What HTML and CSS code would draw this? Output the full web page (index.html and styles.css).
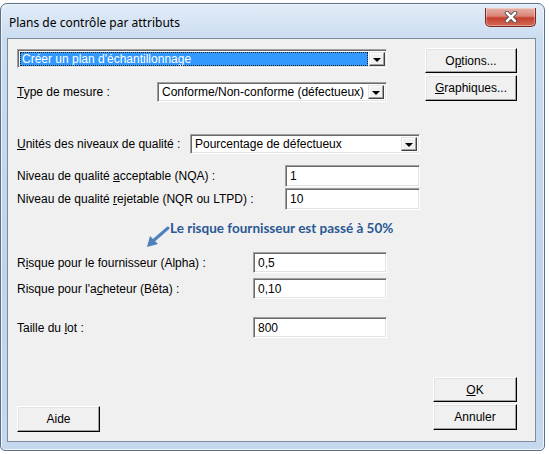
FILE: index.html
```html
<!DOCTYPE html>
<html lang="fr">
<head>
    <meta charset="UTF-8">
    <meta name="viewport" content="width=device-width, initial-scale=1.0">
    <title>Plans de contrôle par attributs</title>
    <link rel="stylesheet" href="styles.css">
</head>
<body>
    <div class="window">
        <div class="titlebar">
            <span class="title">Plans de contrôle par attributs</span>
            <span class="close">
                <svg width="14" height="12" viewBox="0 0 14 12">
                    <path d="M3 2 L11 10 M11 2 L3 10" stroke="#4a4a4a" stroke-width="4.4" stroke-linecap="round"/>
                    <path d="M3 2 L11 10 M11 2 L3 10" stroke="#ffffff" stroke-width="2.6" stroke-linecap="round"/>
                </svg>
            </span>
        </div>
        <div class="client">
            <div class="top">
                <div class="top-left">
                    <div class="combo combo-main">
                        <span class="combo-text selected">Créer un plan d'échantillonnage</span>
                        <span class="drop"></span>
                    </div>
                    <div class="row row-type">
                        <span class="lbl lbl-type"><u>T</u>ype de mesure :</span>
                        <div class="combo combo-type">
                            <span class="combo-text">Conforme/Non-conforme (défectueux)</span>
                            <span class="drop"></span>
                        </div>
                    </div>
                </div>
                <div class="side">
                    <button class="btn btn-options">O<u>p</u>tions...</button>
                    <button class="btn btn-graph"><u>G</u>raphiques...</button>
                </div>
            </div>

            <div class="row row-units">
                <span class="lbl lbl-units"><u>U</u>nités des niveaux de qualité :</span>
                <div class="combo combo-units">
                    <span class="combo-text">Pourcentage de défectueux</span>
                    <span class="drop"></span>
                </div>
            </div>
            <div class="row row-nqa">
                <span class="lbl lbl-level">Niveau de qualité <u>a</u>cceptable (NQA) :</span>
                <div class="field field-level">1</div>
            </div>
            <div class="row row-nqr">
                <span class="lbl lbl-level">Niveau de qualité <u>r</u>ejetable (NQR ou LTPD) :</span>
                <div class="field field-level">10</div>
            </div>

            <div class="note">
                <svg class="note-arrow" width="30" height="26" viewBox="0 0 30 26">
                    <path d="M24 4 L9 17" stroke="#4f81bd" stroke-width="3" stroke-linecap="round"/>
                    <path d="M3 23 L6 12 L14 20 Z" fill="#4f81bd"/>
                </svg>
                <span class="note-text">Le risque fournisseur est passé à 50%</span>
            </div>

            <div class="row row-alpha">
                <span class="lbl lbl-risk">R<u>i</u>sque pour le fournisseur (Alpha) :</span>
                <div class="field field-risk">0,5</div>
            </div>
            <div class="row row-beta">
                <span class="lbl lbl-risk">Risque pour l'a<u>c</u>heteur (Bêta) :</span>
                <div class="field field-risk">0,10</div>
            </div>
            <div class="row row-lot">
                <span class="lbl lbl-risk">Taille du <u>l</u>ot :</span>
                <div class="field field-risk">800</div>
            </div>

            <div class="footer">
                <button class="btn btn-help">Aide</button>
                <div class="side">
                    <button class="btn btn-ok"><u>O</u>K</button>
                    <button class="btn btn-cancel">Annuler</button>
                </div>
            </div>
        </div>
    </div>
</body>
</html>
```

FILE: styles.css
```css
*{
    box-sizing: border-box;
}
body{
    margin: 0;
    padding: 3px 0 0 0;
    background-color: #ffffff;
    font-family: 'Liberation Sans', Arial, sans-serif;
    font-size: 12px;
    color: #000000;
}
.window{
    width: 545px;
    height: 448px;
    border: 1px solid #5b6f86;
    border-radius: 7px 7px 5px 5px;
    background: linear-gradient(180deg, #e2ecf8 0%, #cadcf0 8%, #bfd3eb 60%, #c6d8ee 100%);
    box-shadow: inset 1px 1px 0 #eef4fb, inset -1px -1px 0 #eef4fb;
}
.titlebar{
    height: 34px;
    display: flex;
    align-items: flex-start;
    justify-content: space-between;
    padding: 0 8px 0 8px;
}
.title{
    margin-top: 11px;
    line-height: 16px;
    font-family: 'Noto Sans', sans-serif;
    font-size: 12px;
    color: #000000;
}
.close{
    margin-top: 4px;
    margin-right: 0;
    width: 51px;
    height: 19px;
    display: flex;
    align-items: center;
    justify-content: center;
    border: 1px solid #7a2a22;
    border-top: none;
    border-radius: 0 0 5px 5px;
    background: linear-gradient(180deg, #e8b1a8 0%, #d88476 45%, #c5402f 55%, #d26a55 100%);
    box-shadow: inset 0 0 0 1px rgba(255,255,255,0.35);
}
.client{
    margin-left: 6px;
    width: 529px;
    height: 404px;
    border: 1px solid #7d8b9c;
    background-color: #f0f0f0;
    padding: 10px 0 0 9px;
}
.row{
    display: flex;
    align-items: center;
}
.lbl{
    flex: none;
    white-space: nowrap;
}

/* combos */
.combo{
    flex: none;
    display: flex;
    align-items: stretch;
    background-color: #ffffff;
    border: 1px solid;
    border-color: #a0a0a0 #ffffff #ffffff #a0a0a0;
    box-shadow: inset 1px 1px 0 #696969, inset -1px -1px 0 #e3e3e3;
    padding: 2px 2px 2px 2px;
}
.combo-text{
    flex: 1;
    line-height: 14px;
    padding-left: 2px;
    white-space: nowrap;
    overflow: hidden;
}
.combo-text.selected{
    background-color: #3399ff;
    color: #ffffff;
    outline: 1px dotted #1a1a1a;
    outline-offset: -1px;
}
.drop{
    width: 16px;
    flex: none;
    margin-left: 1px;
    background-color: #f0f0f0;
    border: 1px solid;
    border-color: #e3e3e3 #404040 #404040 #e3e3e3;
    box-shadow: inset -1px -1px 0 #a0a0a0, inset 1px 1px 0 #ffffff;
    position: relative;
}
.drop::after{
    content: "";
    position: absolute;
    left: 3px;
    top: 5px;
    border-left: 4px solid transparent;
    border-right: 4px solid transparent;
    border-top: 4px solid #000000;
}
.combo-main{
    width: 370px;
    height: 19px;
    padding: 2px 1px 1px 2px;
}
.combo-type{
    width: 230px;
    height: 20px;
}
.combo-units{
    width: 230px;
    height: 20px;
}

/* edit fields */
.field{
    flex: none;
    background-color: #ffffff;
    border: 1px solid;
    border-color: #a0a0a0 #ffffff #ffffff #a0a0a0;
    box-shadow: inset 1px 1px 0 #696969, inset -1px -1px 0 #e3e3e3;
    padding: 0 4px;
    display: flex;
    align-items: center;
}
.field-level{
    width: 135px;
    height: 22px;
}
.field-risk{
    width: 134px;
    height: 21px;
}

/* buttons */
.btn{
    display: block;
    font-family: inherit;
    font-size: 12px;
    color: #000000;
    background-color: #f0f0f0;
    border: 1px solid;
    border-color: #ffffff #000000 #000000 #ffffff;
    box-shadow: inset -1px -1px 0 #a0a0a0, inset 1px 1px 0 #e3e3e3;
    padding: 0;
    text-align: center;
}

/* top block */
.top{
    display: flex;
    height: 53px;
}
.row-type{
    margin-top: 14px;
}
.lbl-type{
    width: 140px;
}
.side{
    display: flex;
    flex-direction: column;
    gap: 2px;
    margin-left: 38px;
    margin-top: -1px;
}
.btn-options{
    width: 92px;
    height: 25px;
}
.btn-graph{
    width: 92px;
    height: 26px;
}

/* quality levels */
.row-units{
    margin-top: 32px;
}
.lbl-units{
    width: 173px;
}
.row-nqa{
    margin-top: 11px;
}
.row-nqr{
    margin-top: 1px;
}
.lbl-level{
    width: 268px;
}

/* annotation */
.note{
    position: relative;
    height: 24px;
    margin-top: 6px;
    padding-left: 153px;
    display: flex;
    align-items: center;
}
.note-text{
    font-family: Lato, sans-serif;
    font-weight: bold;
    font-size: 13.5px;
    color: #2a5894;
}
.note-arrow{
    position: absolute;
    left: 127px;
    top: 8px;
}

/* risks */
.row-alpha{
    margin-top: 12px;
}
.row-beta{
    margin-top: 5px;
}
.row-lot{
    margin-top: 18px;
}
.lbl-risk{
    width: 236px;
}

/* footer */
.footer{
    display: flex;
    align-items: flex-end;
    margin-top: 39px;
}
.btn-help{
    width: 83px;
    height: 26px;
    margin-bottom: -2px;
}
.footer .side{
    margin-left: auto;
    margin-right: 18px;
    margin-top: 0;
}
.btn-ok{
    width: 84px;
    height: 25px;
}
.btn-cancel{
    width: 84px;
    height: 26px;
}
```
